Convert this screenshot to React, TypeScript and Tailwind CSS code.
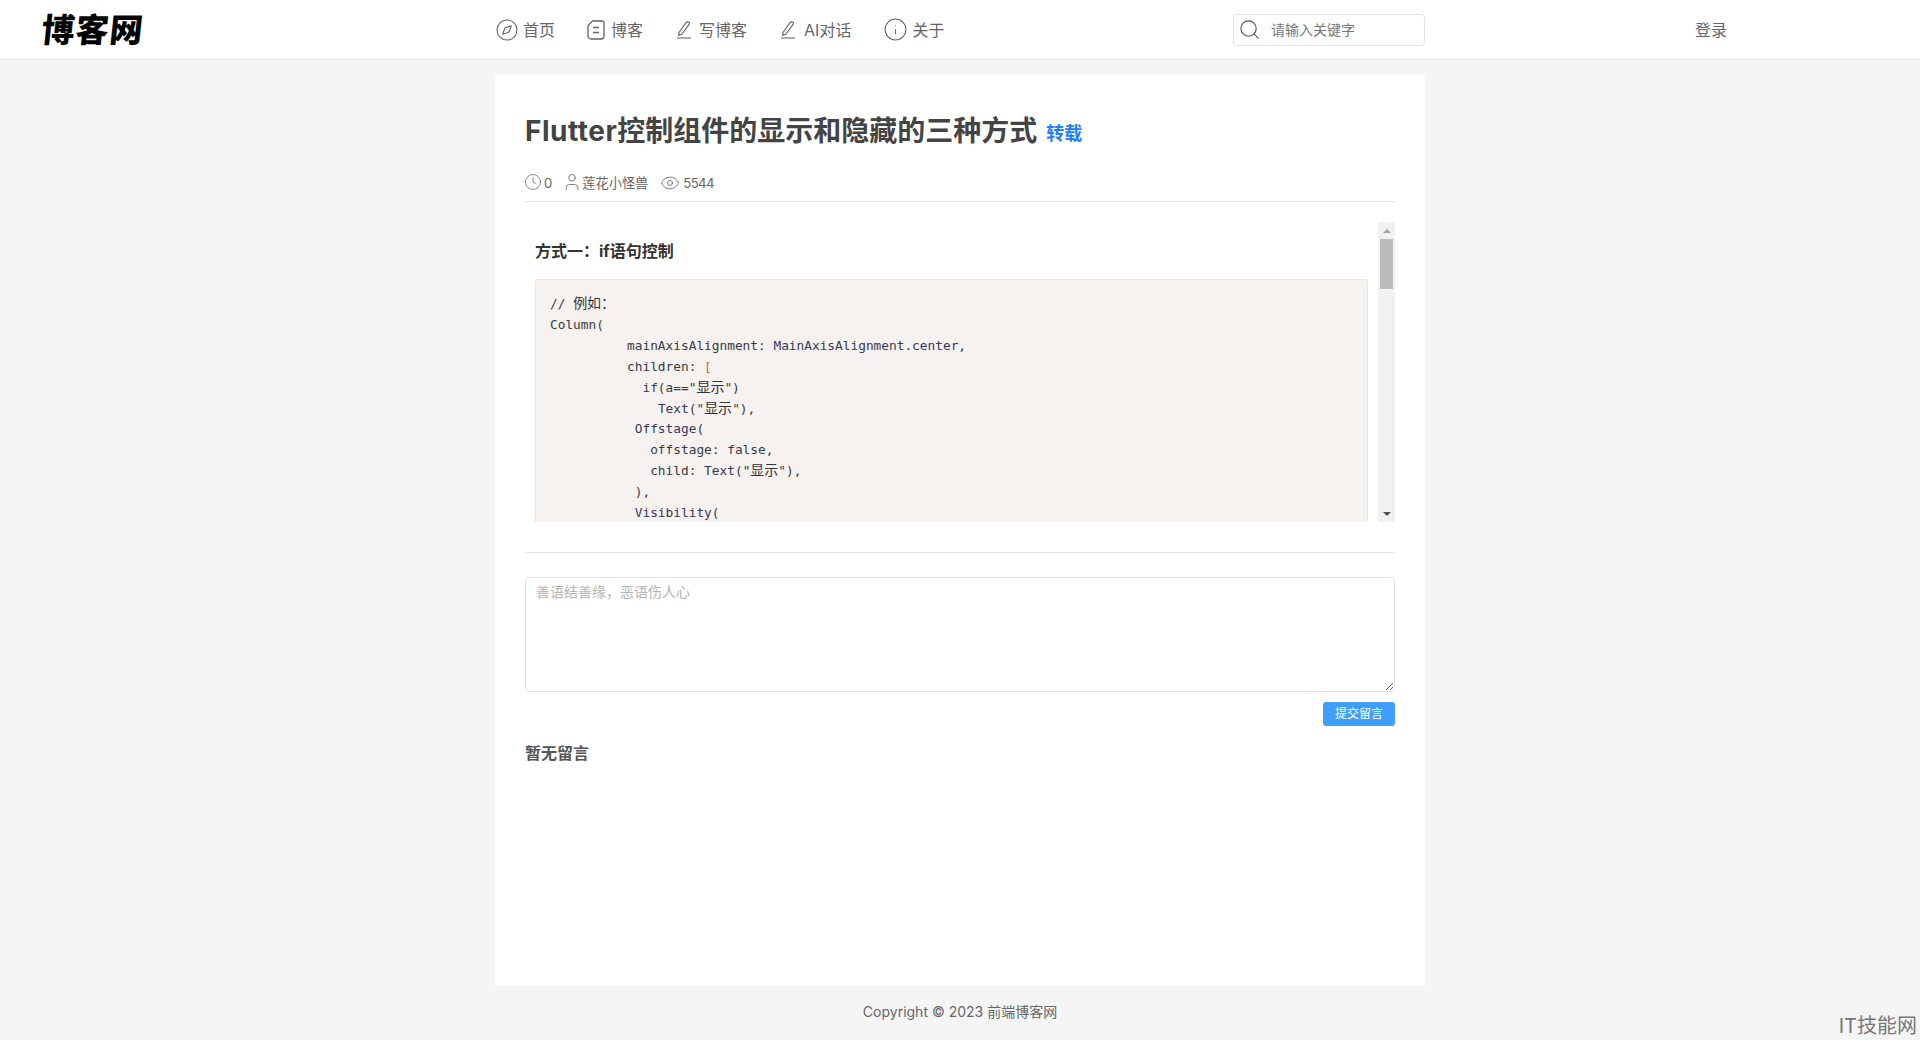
import { Clock, Compass, Eye, Info, Search, User } from "lucide-react";

const FONT = "font-['Inter','Noto_Sans_CJK_SC',sans-serif]";

function Pen() {
  return (
    <svg width="18" height="19" viewBox="0 0 18 19" fill="none" stroke="#666" strokeWidth="1.2" className="shrink-0">
      <path d="M4 12.5 11.5 2.2c.5-.6 1.2-.7 1.8-.3l.6.4c.6.4.7 1.2.3 1.8L6.8 14.3l-3.2 1z" />
      <path d="M2 18h14" strokeWidth="1.4" stroke="#888" />
    </svg>
  );
}

function Doc() {
  return (
    <svg width="18" height="20" viewBox="0 0 18 20" fill="none" stroke="#666" strokeWidth="1.3" className="shrink-0">
      <path d="M5.5 1H15a2 2 0 0 1 2 2v13a3 3 0 0 1-3 3H4a3 3 0 0 1-3-3V5.5z" />
      <path d="M6 7.5h6M6 12.5h6" />
    </svg>
  );
}

function NavItem({ icon, label, gap }: { icon: React.ReactNode; label: string; gap: string }) {
  return (
    <a className={`flex items-center ${gap} text-base text-[#666]`}>
      {icon}
      <span>{label}</span>
    </a>
  );
}

function C({ children }: { children: React.ReactNode }) {
  return <span className="text-[14px] leading-[0] text-[#333] font-['Noto_Sans_CJK_SC',sans-serif]">{children}</span>;
}

function Code() {
  const t = "text-[#38385e]";
  return (
    <pre className="mt-[16px] overflow-hidden rounded-[3px] border border-[#e8e6e3] bg-[#f5f2f0] px-[14px] pt-[14px] pb-[20px] font-['DejaVu_Sans_Mono',monospace] text-[12.8px] leading-[20.9px] text-[#383a42]">
      {"// "}<C>例如：</C>{"\n"}
      {"Column(\n"}
      {"          mainAxisAlignment: "}<span className={t}>MainAxisAlignment.center</span>{",\n"}
      {"          children: "}<span className="text-[#b5702a]">[</span>{"\n"}
      {"            if(a==\""}<C>显示</C>{"\")\n"}
      {"              "}<span className={t}>Text</span>{"(\""}<C>显示</C>{"\"),\n"}
      {"           "}<span className={t}>Offstage</span>{"(\n"}
      {"             offstage: false,\n"}
      {"             child: "}<span className={t}>Text</span>{"(\""}<C>显示</C>{"\"),\n"}
      {"           ),\n"}
      {"           "}<span className={t}>Visibility</span>{"(\n"}
    </pre>
  );
}

export default function App() {
  return (
    <div className={`relative flex h-[1040px] flex-col overflow-hidden bg-[#f5f5f5] ${FONT}`}>
      <header className="flex h-[60px] shrink-0 items-center border-b border-[#e2e2e2] bg-white">
        <div className="w-[497px] shrink-0 pl-[42px]">
          <span className="inline-block origin-left -skew-x-6 text-[33px] leading-none font-black tracking-[1px] text-black font-['Noto_Sans_CJK_SC',sans-serif]">
            博客网
          </span>
        </div>
        <nav className="-ml-[2px] flex w-[738px] shrink-0 items-center gap-[32px]">
          <NavItem gap="gap-[4px]" label="首页" icon={<Compass size={24} strokeWidth={1.1} color="#666" />} />
          <NavItem gap="gap-[6px]" label="博客" icon={<Doc />} />
          <NavItem gap="gap-[6px]" label="写博客" icon={<Pen />} />
          <NavItem gap="gap-[7px]" label="AI对话" icon={<Pen />} />
          <NavItem gap="gap-[4px]" label="关于" icon={<Info size={25} strokeWidth={1} color="#666" />} />
        </nav>
        <div className="flex h-[32px] w-[192px] shrink-0 items-center rounded-[4px] border border-[#e4e4e4] pl-[4px]">
          <Search size={23} strokeWidth={1.2} color="#555" />
          <span className="ml-[10px] text-sm text-[#777]">请输入关键字</span>
        </div>
        <a className="ml-[270px] text-base text-[#666]">登录</a>
      </header>

      <main className="mx-auto mt-[15px] flex h-[911px] w-[930px] shrink-0 flex-col bg-white px-[30px]">
        <div className="flex h-[83px] items-end gap-[9px] pb-[6px]">
          <h1 className="text-[28px] leading-[42px] font-bold text-[#444]">
            <span className="tracking-[0.5px]">Flutter</span>控制组件的显示和隐藏的三种方式
          </h1>
          <span className="pb-[4px] text-lg leading-[28px] font-bold text-[#1e80ff]">转载</span>
        </div>
        <div className="mt-[14px] flex h-[30px] items-start border-b border-[#e2e2e2] pt-[1px] text-[13.2px] leading-[20px] text-[#666]">
          <Clock size={18} strokeWidth={1} color="#666" className="-ml-[1px]" />
          <span className="ml-[2px]">0</span>
          <User size={20} strokeWidth={1} color="#666" className="ml-[10px] -mt-[1px]" />
          <span>莲花小怪兽</span>
          <Eye size={20} strokeWidth={1} color="#666" className="ml-[12px]" />
          <span className="ml-[3px] tracking-[-0.6px]">5544</span>
        </div>

        <div className="mt-[20px] flex h-[300px] shrink-0">
          <div className="min-w-0 flex-1 overflow-hidden pl-[10px] pr-[10px]">
            <h3 className="mt-[17px] text-base leading-[24px] font-bold text-[#333]">方式一：if语句控制</h3>
            <Code />
          </div>
          <div className="flex w-[17px] shrink-0 flex-col items-center bg-[#f1f1f1]">
            <div className="mt-[7px] h-0 w-0 border-x-[4px] border-b-[4px] border-x-transparent border-b-[#a3a3a3]" />
            <div className="mt-[6px] h-[50px] w-[13px] bg-[#bcbcbc]" />
            <div className="mt-auto mb-[6px] h-0 w-0 border-x-[4px] border-t-[4px] border-x-transparent border-t-[#505050]" />
          </div>
        </div>

        <div className="mt-[30px] border-t border-[#e2e2e2]" />
        <textarea
          readOnly
          placeholder="善语结善缘，恶语伤人心"
          className="mt-[24px] h-[115px] w-full rounded-[4px] border border-[#dcdfe6] px-[10px] py-[3px] text-sm leading-[21px] outline-none placeholder:text-[#b5b5b5]"
        />
        <div className="mt-[10px] flex justify-end">
          <button className="h-[24px] w-[72px] rounded-[3px] bg-[#409eff] text-xs text-white">提交留言</button>
        </div>
        <div className="mt-[15px] text-base leading-[24px] font-bold text-[#555]">暂无留言</div>
      </main>

      <footer className="flex h-[52px] items-center justify-center text-sm text-[#666]">Copyright © 2023 前端博客网</footer>
      <div className="absolute right-[3px] bottom-[2px] text-xl leading-[24px] text-[#777]">IT技能网</div>
    </div>
  );
}
